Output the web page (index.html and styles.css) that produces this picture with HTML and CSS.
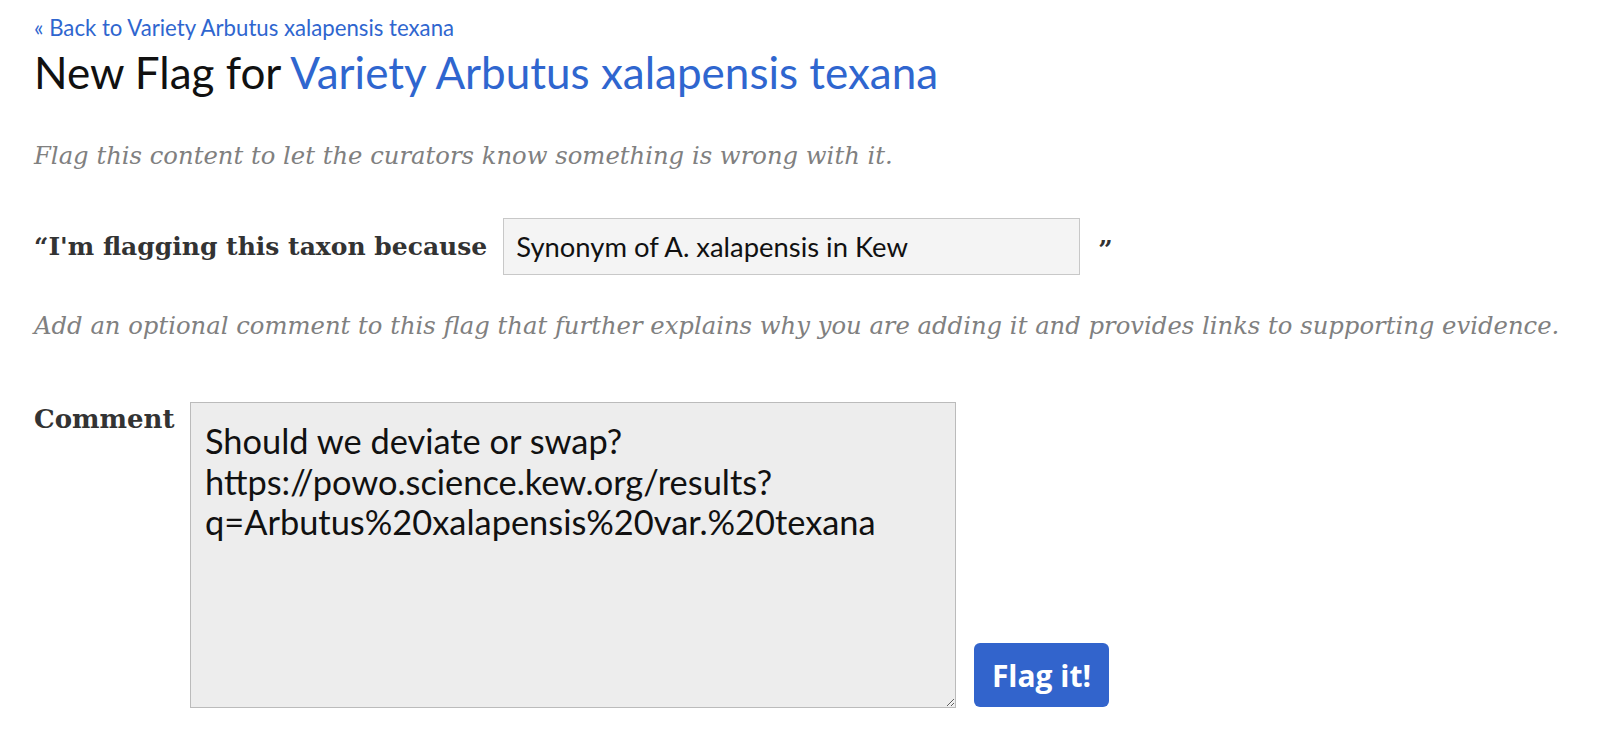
FILE: index.html
```html
<!DOCTYPE html>
<html>
<head>
<meta charset="utf-8">
<link rel="stylesheet" href="styles.css">
</head>
<body>
<div class="page">
  <a class="back" href="#">« Back to Variety Arbutus xalapensis texana</a>
  <h1 class="title">New Flag for <a href="#">Variety Arbutus xalapensis texana</a></h1>
  <p class="desc first">Flag this content to let the curators know something is wrong with it.</p>
  <div class="reason-row">
    <label class="label">“I'm flagging this taxon because</label>
    <input class="reason" type="text" value="Synonym of A. xalapensis in Kew">
    <span class="close-quote">”</span>
  </div>
  <p class="desc second">Add an optional comment to this flag that further explains why you are adding it and provides links to supporting evidence.</p>
  <div class="comment-row">
    <label class="label comment-label">Comment</label>
    <textarea class="comment">Should we deviate or swap? https://powo.science.kew.org/results?q=Arbutus%20xalapensis%20var.%20texana</textarea>
    <button class="submit" type="button">Flag it!</button>
  </div>
</div>
</body>
</html>
```
FILE: styles.css
```css
html, body {
  margin: 0;
  padding: 0;
  background: #fff;
}
.page {
  padding: 14px 34px 0 34px;
  font-family: Lato, "Liberation Sans", sans-serif;
}
a {
  color: #2f66cf;
  text-decoration: none;
}
.back {
  display: block;
  font-size: 22.2px;
  line-height: 28px;
}
.title {
  margin: 0;
  font-weight: 400;
  font-size: 44px;
  line-height: 60px;
  color: #111;
}
.desc {
  margin: 0;
  font-family: "DejaVu Serif", Georgia, serif;
  font-style: italic;
  color: #808080;
  font-size: 24.3px;
  line-height: 30px;
}
.desc.first {
  margin-top: 39px;
}
.reason-row {
  display: flex;
  align-items: center;
  margin-top: 47px;
}
.label {
  font-family: "DejaVu Serif", Georgia, serif;
  font-weight: bold;
  font-size: 25px;
  line-height: 34px;
  color: #333;
}
.reason {
  margin: 0 0 0 16px;
  width: 577px;
  height: 57px;
  box-sizing: border-box;
  border: 1px solid #c8c8c8;
  background: #f4f4f4;
  padding: 0 12px;
  font-family: Lato, sans-serif;
  font-size: 27.4px;
  color: #111;
}
.close-quote {
  margin-left: 18px;
  font-family: "DejaVu Serif", serif;
  font-weight: bold;
  font-size: 25px;
  line-height: 34px;
  color: #333;
  align-self: flex-start;
  margin-top: 15px;
}
.desc.second {
  margin-top: 36px;
}
.comment-row {
  display: flex;
  align-items: flex-start;
  margin-top: 61px;
}
.comment-label {
  width: 156px;
  flex: none;
  font-size: 26px;
}
.comment {
  margin: 0;
  width: 766px;
  height: 306px;
  flex: none;
  box-sizing: border-box;
  border: 1px solid #bbb;
  background: #ededed;
  padding: 18px 14px;
  font-family: Lato, sans-serif;
  font-size: 34.4px;
  line-height: 40.5px;
  color: #111;
  resize: both;
}
.submit {
  align-self: flex-end;
  margin: 0 0 1px 18px;
  width: 135px;
  height: 64px;
  border: none;
  border-radius: 6px;
  background: #3264cc;
  color: #fff;
  font-family: "Open Sans", Lato, sans-serif;
  font-weight: bold;
  font-size: 30px;
  padding: 0;
}
```
